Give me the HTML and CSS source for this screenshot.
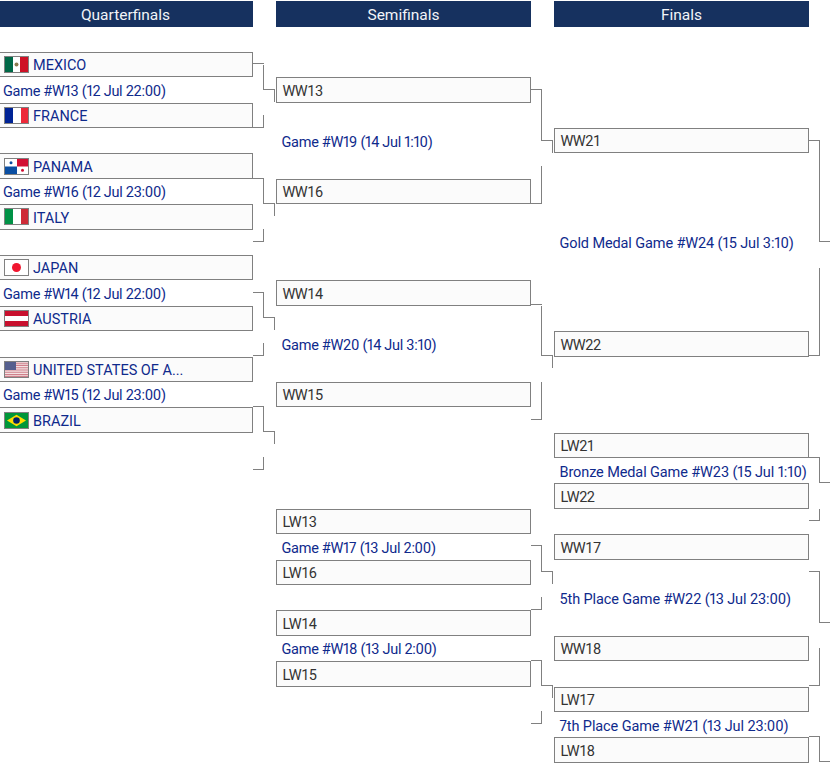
FILE: index.html
```html
<!DOCTYPE html>
<html lang="en">
<head>
<meta charset="utf-8">
<title>Bracket</title>
<link rel="stylesheet" href="styles.css">
</head>
<body>
<main class="bracket">
  <section class="round">
    <h2 class="head">Quarterfinals</h2>
    <div class="box mt1"><svg class="flag" viewBox="0 0 23 15" preserveAspectRatio="none"><rect width="8" height="15" fill="#006847"/><rect x="8" width="7" height="15" fill="#fff"/><rect x="15" width="8" height="15" fill="#ce1126"/><circle cx="11.500" cy="7.500" r="2" fill="#8c7a4f"/></svg><span class="name">MEXICO</span></div>
    <div class="game">Game #W13 (12 Jul 22:00)</div>
    <div class="box"><svg class="flag" viewBox="0 0 23 15" preserveAspectRatio="none"><rect width="8" height="15" fill="#002395"/><rect x="8" width="8" height="15" fill="#fff"/><rect x="16" width="7" height="15" fill="#ed2939"/></svg><span class="name">FRANCE</span></div>
    <div class="box mt1"><svg class="flag" viewBox="0 0 23 15" preserveAspectRatio="none"><rect width="23" height="15" fill="#fff"/><rect x="12" width="11" height="7.500" fill="#d21034"/><rect y="7.500" width="12" height="7.500" fill="#0a4ea2"/><circle cx="6" cy="3.800" r="1.500" fill="#0a4ea2"/><circle cx="17.500" cy="11.200" r="1.500" fill="#d21034"/></svg><span class="name">PANAMA</span></div>
    <div class="game">Game #W16 (12 Jul 23:00)</div>
    <div class="box"><svg class="flag" viewBox="0 0 23 15" preserveAspectRatio="none"><rect width="8" height="15" fill="#009246"/><rect x="8" width="8" height="15" fill="#fff"/><rect x="16" width="7" height="15" fill="#ce2b37"/></svg><span class="name">ITALY</span></div>
    <div class="box mt1"><svg class="flag" viewBox="0 0 23 15" preserveAspectRatio="none"><rect width="23" height="15" fill="#fff"/><circle cx="11.500" cy="7.500" r="4.500" fill="#f0162f"/></svg><span class="name">JAPAN</span></div>
    <div class="game">Game #W14 (12 Jul 22:00)</div>
    <div class="box"><svg class="flag" viewBox="0 0 23 15" preserveAspectRatio="none"><rect width="23" height="15" fill="#c8102e"/><rect y="5" width="23" height="5" fill="#fff"/></svg><span class="name">AUSTRIA</span></div>
    <div class="box mt1"><svg class="flag" viewBox="0 0 23 15" preserveAspectRatio="none"><rect width="23" height="15" fill="#f3e3e3"/><path d="M0 1.200h23M0 3.400h23M0 5.700h23M0 8h23M0 10.300h23M0 12.600h23M0 14.500h23" stroke="#d0808c" stroke-width="1.100"/><rect width="11" height="8" fill="#555f8e"/></svg><span class="name">UNITED STATES OF A...</span></div>
    <div class="game">Game #W15 (12 Jul 23:00)</div>
    <div class="box"><svg class="flag" viewBox="0 0 23 15" preserveAspectRatio="none"><rect width="23" height="15" fill="#009739"/><path d="M11.500 1.800 21 7.500l-9.500 5.700L2 7.500z" fill="#fedd00"/><circle cx="11.500" cy="7.500" r="3.300" fill="#012169"/></svg><span class="name">BRAZIL</span></div>
  </section>

  <section class="round">
    <h2 class="head">Semifinals</h2>
    <div class="box seed mt2">WW13</div>
    <div class="game inset mt1">Game #W19 (14 Jul 1:10)</div>
    <div class="box seed mt1">WW16</div>
    <div class="box seed mt3">WW14</div>
    <div class="game inset mt1">Game #W20 (14 Jul 3:10)</div>
    <div class="box seed mt1">WW15</div>
    <div class="box seed mt4">LW13</div>
    <div class="game inset">Game #W17 (13 Jul 2:00)</div>
    <div class="box seed">LW16</div>
    <div class="box seed mt1">LW14</div>
    <div class="game inset">Game #W18 (13 Jul 2:00)</div>
    <div class="box seed">LW15</div>
  </section>

  <section class="round">
    <h2 class="head">Finals</h2>
    <div class="box seed mt4">WW21</div>
    <div class="game inset long mt3">Gold Medal Game #W24 (15 Jul 3:10)</div>
    <div class="box seed mt3">WW22</div>
    <div class="box seed mt3">LW21</div>
    <div class="game inset long">Bronze Medal Game #W23 (15 Jul 1:10)</div>
    <div class="box seed">LW22</div>
    <div class="box seed mt1">WW17</div>
    <div class="game inset long mt1">5th Place Game #W22 (13 Jul 23:00)</div>
    <div class="box seed mt1">WW18</div>
    <div class="box seed mt1">LW17</div>
    <div class="game inset long">7th Place Game #W21 (13 Jul 23:00)</div>
    <div class="box seed">LW18</div>
  </section>

  <svg class="links" width="830" height="767" viewBox="0 0 830 767" aria-hidden="true">
    <path d="M253 63.500H264M263.500 65V89.500M263 89.500H275M274.500 90V102M263.500 115V127.500M253 127.500H264"/>
    <path d="M253 178.500H264M263.500 178V203.500M263 203.500H275M274.500 204V216M263.500 229V241.500M253 241.500H264"/>
    <path d="M253 292.500H264M263.500 293V317.500M263 317.500H275M274.500 318V330M263.500 343V355.500M253 355.500H264"/>
    <path d="M253 406.500H264M263.500 406V431.500M263 431.500H275M274.500 432V444M263.500 457V469.500M253 469.500H264"/>

    <path d="M531 89.500H542M541.500 89V140.500M541 140.500H553M552.500 140V153M541.500 166V203.500M531 203.500H542"/>
    <path d="M531 304.500H542M541.500 306V355.500M541 355.500H553M552.500 355V368M541.500 382V419.500M531 419.500H542"/>
    <path d="M531 545.500H542M541.500 546V571.500M541 571.500H553M552.500 571V584M541.500 597V609.500M531 609.500H542"/>
    <path d="M531 660.500H542M541.500 660V685.500M541 685.500H553M552.500 685V698M541.500 711V723.500M531 723.500H542"/>

    <path d="M809 140.500H820M819.500 140V241.500M819 241.500H830M819.500 268V355.500M809 355.500H820"/>
    <path d="M809 457.500H820M819.500 457V482.500M819 482.500H830M819.500 509V520.500M809 520.500H820"/>
    <path d="M809 571.500H820M819.500 571V622.500M819 622.500H830M819.500 648V685.500M809 685.500H820"/>
    <path d="M809 736.500H820M819.500 736V761.500M819 761.500H830"/>
  </svg>
</main>
</body>
</html>
```
FILE: styles.css
```css
:root {
  --row: 25.391px;
}

* {
  box-sizing: border-box;
}

html,
body {
  margin: 0;
  height: 767px;
  overflow: hidden;
  background: #fff;
}

body {
  font-family: Roboto, "Liberation Sans", sans-serif;
  font-size: 14.5px;
}

.bracket {
  position: relative;
  display: flex;
  gap: 23px;
  width: 832px;
  margin-left: -2px;
  padding-top: 1.05px;
}

.round {
  flex: 0 0 255px;
  display: flex;
  flex-direction: column;
  min-width: 0;
}

.head {
  flex: none;
  height: 25.75px;
  margin: 0 0 -0.359px;
  padding-top: 1px;
  background: #16315f;
  color: #f2f4f8;
  font-size: 15.5px;
  font-weight: 400;
  line-height: 26px;
  text-align: center;
}

.box,
.game {
  flex: 0 0 var(--row);
  height: var(--row);
  display: flex;
  align-items: center;
  white-space: nowrap;
}

.box {
  border: 1px solid #808080;
  background: #fbfbfb;
  color: #333;
  padding-left: 5px;
}

.seed {
  padding: 2.5px 0 0 5.5px;
  letter-spacing: -0.5px;
}

.flag {
  flex: none;
  width: 25px;
  height: 17px;
  border: 1px solid #808080;
  margin-right: 4px;
}

.name,
.game {
  color: #0f2a8c;
}

.name {
  padding-top: 2.5px;
}

.game {
  padding: 2.75px 0 0 5px;
  font-variant-numeric: proportional-nums;
  letter-spacing: -0.28px;
}

.inset {
  padding-left: 5.5px;
}

.long {
  letter-spacing: -0.11px;
}

.mt1 {
  margin-top: var(--row);
}

.mt2 {
  margin-top: calc(var(--row) * 2);
}

.mt3 {
  margin-top: calc(var(--row) * 3);
}

.mt4 {
  margin-top: calc(var(--row) * 4);
}

.links {
  position: absolute;
  top: 0;
  left: 2px;
  fill: none;
  stroke: #808080;
  stroke-width: 1;
  shape-rendering: crispEdges;
  pointer-events: none;
}
```
